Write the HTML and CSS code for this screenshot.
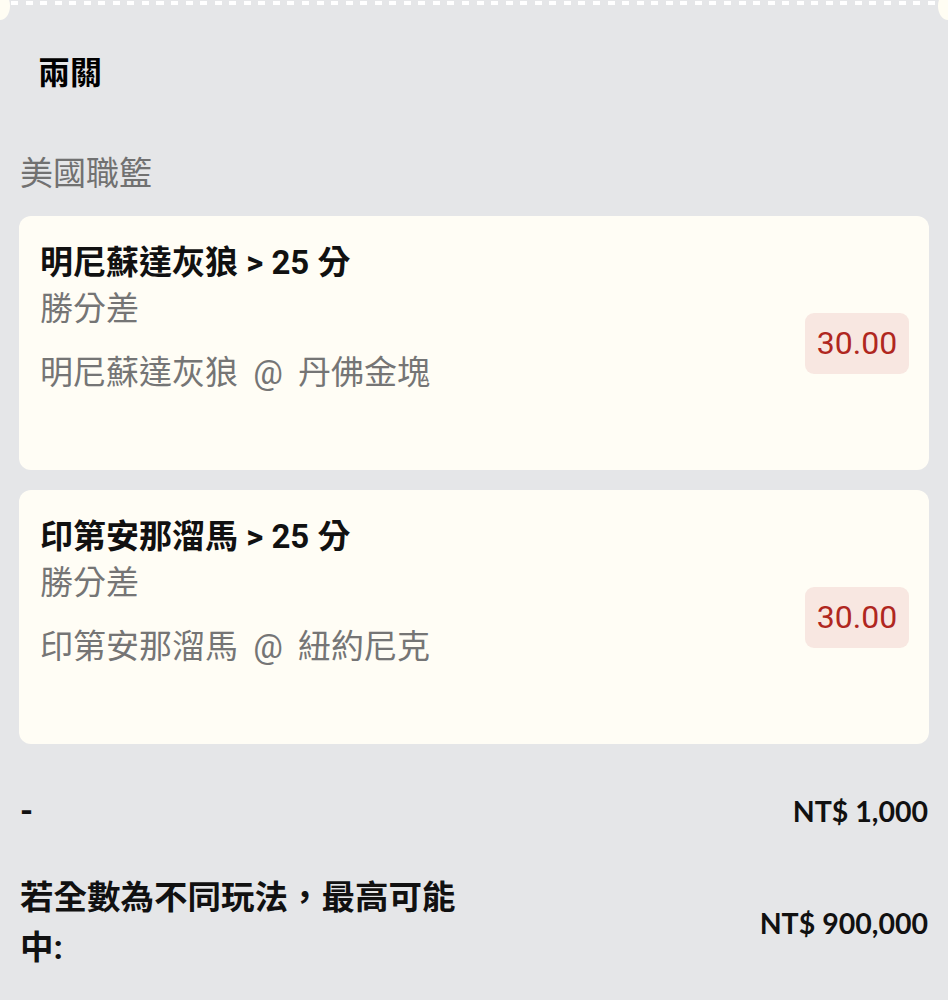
FILE: index.html
```html
<!DOCTYPE html>
<html lang="zh-Hant">
<head>
<meta charset="utf-8">
<link rel="stylesheet" href="styles.css">
</head>
<body>
<div class="ticket">
  <div class="edge">
    <span class="notch notch-left"></span>
    <span class="dashes"></span>
    <span class="notch notch-right"></span>
  </div>
  <h1 class="title">兩關</h1>
  <div class="league">美國職籃</div>
  <div class="cards">
    <div class="card">
      <div class="card-body">
        <div class="pick">明尼蘇達灰狼 &gt; 25 分</div>
        <div class="market">勝分差</div>
        <div class="match">明尼蘇達灰狼 @ 丹佛金塊</div>
      </div>
      <div class="odds">30.00</div>
    </div>
    <div class="card">
      <div class="card-body">
        <div class="pick">印第安那溜馬 &gt; 25 分</div>
        <div class="market">勝分差</div>
        <div class="match">印第安那溜馬 @ 紐約尼克</div>
      </div>
      <div class="odds">30.00</div>
    </div>
  </div>
  <div class="summary">
    <div class="row">
      <div class="label">-</div>
      <div class="value">NT$ 1,000</div>
    </div>
    <div class="row row-tall">
      <div class="label label-wrap">若全數為不同玩法，最高可能中:</div>
      <div class="value">NT$ 900,000</div>
    </div>
  </div>
</div>
</body>
</html>
```

FILE: styles.css
```css
html, body {
  margin: 0;
  padding: 0;
  background: #e5e6e8;
}

body {
  font-family: Lato, "Noto Sans CJK TC", sans-serif;
  color: #111111;
  width: 948px;
  height: 1000px;
  overflow: hidden;
}

.ticket {
  position: relative;
  padding: 0 19px 0 19px;
}

.edge {
  position: relative;
  height: 6px;
  margin: 0 -19px;
}

.dashes {
  position: absolute;
  left: 11px;
  right: 11px;
  top: 1px;
  height: 4px;
  background: repeating-linear-gradient(90deg, #ffffff 0, #ffffff 7px, transparent 7px, transparent 14.55px);
}

.notch {
  position: absolute;
  top: -8px;
  width: 20px;
  height: 28px;
  border-radius: 50%;
  background: #fffdf3;
}

.notch-left { left: -10px; }
.notch-right { right: -10px; }

.title {
  margin: 0;
  padding: 45px 0 0 19px;
  font-family: "Noto Sans CJK TC", sans-serif;
  font-size: 32px;
  line-height: 38px;
  font-weight: 700;
  color: #000000;
}

.league {
  margin-top: 65px;
  padding-left: 1px;
  font-family: Roboto, "Noto Sans CJK TC", sans-serif;
  font-size: 33px;
  line-height: 40px;
  color: #717171;
}

.cards {
  margin-top: 22px;
  display: flex;
  flex-direction: column;
  gap: 20px;
}

.card {
  background: #fffdf5;
  border-radius: 12px;
  height: 254px;
  box-sizing: border-box;
  padding: 24px 20px 0 21px;
  display: flex;
  align-items: center;
  justify-content: space-between;
  font-family: Roboto, "Noto Sans CJK TC", sans-serif;
}

.card-body {
  align-self: flex-start;
}

.pick {
  font-size: 33px;
  line-height: 46px;
  font-weight: 700;
  color: #111111;
}

.market {
  font-size: 33px;
  line-height: 46px;
  color: #757575;
}

.match {
  margin-top: 18px;
  font-size: 33px;
  line-height: 46px;
  word-spacing: 7px;
  color: #757575;
}

.odds {
  margin-top: -24px;
  width: 104px;
  height: 61px;
  box-sizing: border-box;
  border-radius: 9px;
  background: #f8e7e1;
  color: #b0271f;
  font-size: 32px;
  line-height: 61px;
  text-align: center;
}

.summary {
  padding: 0 1px 0 1px;
}

.row {
  display: flex;
  justify-content: space-between;
  align-items: center;
  font-weight: 700;
}

.row:first-child {
  margin-top: 45px;
  height: 44px;
}

.row-tall {
  margin-top: 40px;
}

.label {
  font-family: Roboto, "Noto Sans CJK TC", sans-serif;
  font-size: 33.5px;
  line-height: 50px;
  color: #111111;
}

.label-wrap {
  width: 470px;
}

.value {
  font-size: 28.5px;
  line-height: 40px;
  color: #111111;
}
```
